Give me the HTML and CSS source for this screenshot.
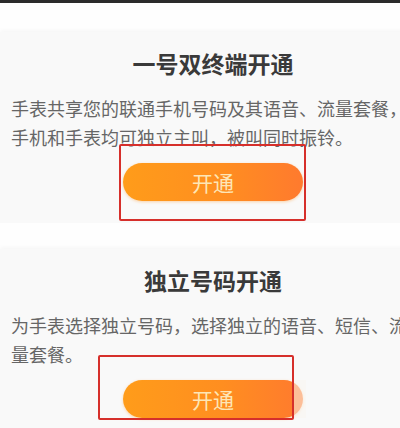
FILE: index.html
```html
<!DOCTYPE html>
<html lang="zh-CN">
<head>
<meta charset="utf-8">
<title>开通</title>
<link rel="stylesheet" href="styles.css">
</head>
<body>
<div class="topbar"></div>
<div class="page">
  <section class="card">
    <h2 class="title">一号双终端开通</h2>
    <p class="desc">手表共享您的联通手机号码及其语音、流量套餐，手机和手表均可独立主叫，被叫同时振铃。</p>
    <div class="action">
      <button class="btn">开通</button>
      <span class="mark mark-1"></span>
    </div>
  </section>
  <section class="card">
    <h2 class="title">独立号码开通</h2>
    <p class="desc">为手表选择独立号码，选择独立的语音、短信、流量套餐。</p>
    <div class="action">
      <button class="btn">开通</button>
      <span class="fade"></span>
      <span class="mark mark-2"></span>
    </div>
  </section>
</div>
</body>
</html>
```
FILE: styles.css
```css
html, body {
  margin: 0;
  padding: 0;
}
body {
  width: 400px;
  height: 428px;
  overflow: hidden;
  background: #fefefe;
  font-family: "Noto Sans CJK SC", "Noto Sans", sans-serif;
}
.topbar {
  height: 3px;
  background: #2b2b2b;
}
.page {
  width: 426px;
  padding-top: 29px;
}
.card {
  background: #f9f9f9;
  padding: 16px 11px 22px;
  box-shadow: 0 -2px 4px rgba(0, 0, 0, 0.03);
}
.card + .card {
  margin-top: 26px;
}
.title {
  margin: 0;
  text-align: center;
  font-size: 23px;
  line-height: 30px;
  font-weight: 700;
  color: #3a3a3a;
}
.desc {
  margin: 16px 0 0;
  font-size: 18px;
  line-height: 29px;
  color: #666;
}
.action {
  position: relative;
  width: 180px;
  height: 38px;
  margin: 11px auto 0;
}
.btn {
  display: block;
  width: 100%;
  height: 38px;
  border: 0;
  padding: 0;
  border-radius: 19px;
  background: linear-gradient(90deg, #ff9c1a 0%, #ff8e20 55%, #ff7a2e 100%);
  box-shadow: 0 1px 3px rgba(255, 140, 20, 0.35);
  color: #fde6b6;
  font-family: "Noto Sans CJK SC", sans-serif;
  font-size: 21px;
  line-height: 38px;
}
.mark {
  position: absolute;
  border: 2px solid #d62f2b;
  border-radius: 2px;
}
.mark-1 {
  left: -4px;
  right: -3px;
  top: -19px;
  bottom: -20px;
}
.mark-2 {
  left: -25px;
  right: 9px;
  top: -25px;
  bottom: -2px;
}
.fade {
  position: absolute;
  left: 171px;
  width: 12px;
  top: 0;
  bottom: 0;
  background: rgba(250, 246, 240, 0.55);
}
```
